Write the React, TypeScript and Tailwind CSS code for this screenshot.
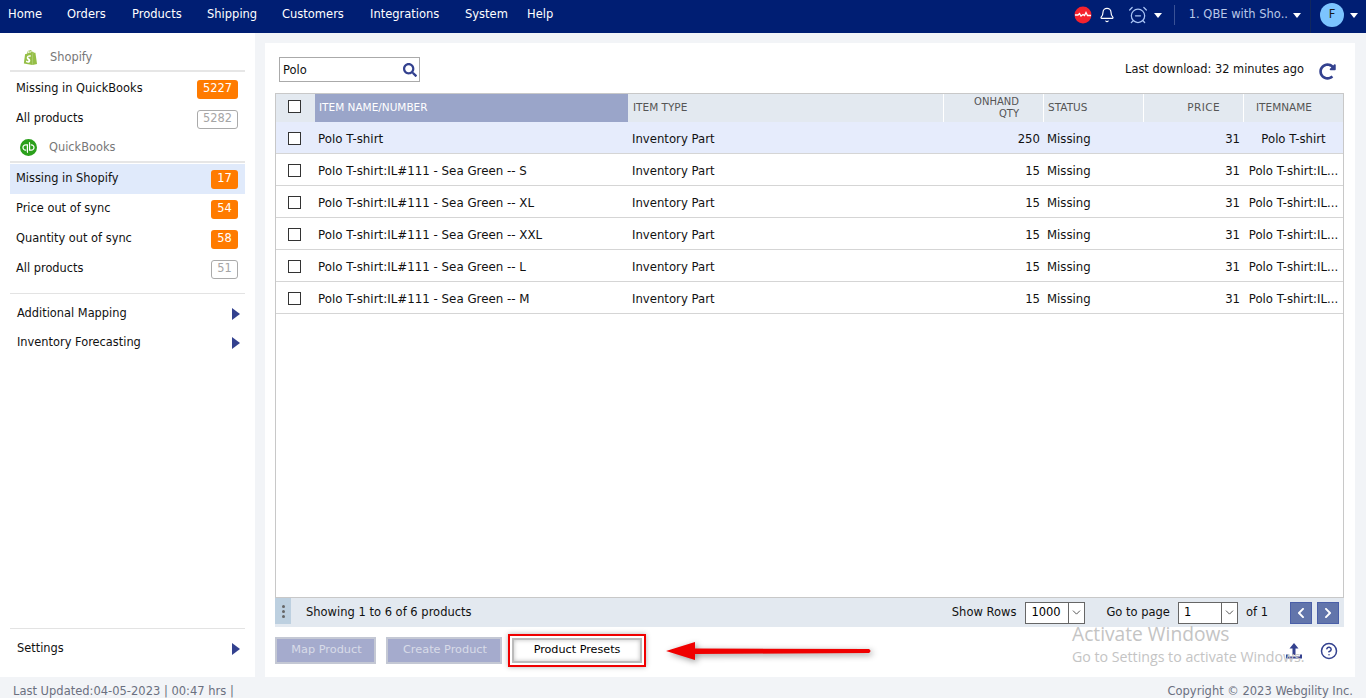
import { AlarmClockMinus, Bell, ChevronDown, CircleHelp } from 'lucide-react';
import { FaChevronLeft, FaChevronRight, FaRedoAlt, FaSearch } from 'react-icons/fa';
import { SiQuickbooks, SiShopify } from 'react-icons/si';

const navItems = [
	{ label: 'Home', width: 'w-[59px]' },
	{ label: 'Orders', width: 'w-[65px]' },
	{ label: 'Products', width: 'w-[75px]' },
	{ label: 'Shipping', width: 'w-[75px]' },
	{ label: 'Customers', width: 'w-[88px]' },
	{ label: 'Integrations', width: 'w-[95px]' },
	{ label: 'System', width: 'w-[62px]' },
	{ label: 'Help', width: 'w-[40px]' },
];

const rows = [
	{ name: 'Polo T-shirt', qty: '250', item: 'Polo T-shirt', selected: true },
	{ name: 'Polo T-shirt:IL#111 - Sea Green -- S', qty: '15', item: 'Polo T-shirt:IL...' },
	{ name: 'Polo T-shirt:IL#111 - Sea Green -- XL', qty: '15', item: 'Polo T-shirt:IL...' },
	{ name: 'Polo T-shirt:IL#111 - Sea Green -- XXL', qty: '15', item: 'Polo T-shirt:IL...' },
	{ name: 'Polo T-shirt:IL#111 - Sea Green -- L', qty: '15', item: 'Polo T-shirt:IL...' },
	{ name: 'Polo T-shirt:IL#111 - Sea Green -- M', qty: '15', item: 'Polo T-shirt:IL...' },
];

const gridCols = 'grid grid-cols-[39px_313px_316px_100px_100px_100px_99px]';

const Caret = () => (
	<span className="inline-block h-0 w-0 border-x-[4px] border-t-[5px] border-x-transparent border-t-white" />
);

const Arrow = () => (
	<span className="inline-block h-0 w-0 border-y-[6px] border-l-[8px] border-y-transparent border-l-[#33418f]" />
);

const CheckBox = () => <span className="block h-[13px] w-[13px] border border-[#333] bg-white" />;

const SideRow = ({ label, count, muted, active }: { label: string; count: string; muted?: boolean; active?: boolean }) => (
	<div className={`flex h-[30px] items-center justify-between pl-[6px] pr-[7px] ${active ? 'bg-[#e0eafb]' : ''}`}>
		<span className="text-[#111]">{label}</span>
		<span
			className={`flex h-[19px] min-w-[27px] items-center justify-center rounded-[3px] ${
				muted ? 'border border-[#aaa] bg-white px-[5px] text-[#a5a5a5]' : 'bg-[#ff7b00] px-[6px] text-white'
			}`}
		>
			{count}
		</span>
	</div>
);

const SideLink = ({ label }: { label: string }) => (
	<div className="flex h-[29px] items-center justify-between pl-[7px] pr-[5px] text-[#111]">
		<span>{label}</span>
		<Arrow />
	</div>
);

const SelectBox = ({ value, width }: { value: string; width: string }) => (
	<div className={`flex h-[22px] items-center border border-[#666] bg-white ${width}`}>
		<span className="flex-1 pl-[5px] text-black">{value}</span>
		<span className="flex h-full w-[16px] items-center justify-center border-l border-[#666]">
			<ChevronDown size={13} strokeWidth={1.5} color="#333" />
		</span>
	</div>
);

const App = () => {
	return (
		<div className="relative flex h-[698px] w-full flex-col overflow-hidden bg-[#f2f4f7] font-['DejaVu_Sans',sans-serif] text-[11.5px] text-[#111]">
			{/* top nav */}
			<header className="flex h-[33px] items-center bg-[#001e73] pb-[3px] pl-[8px] text-white">
				{navItems.map((n) => (
					<span key={n.label} className={n.width}>
						{n.label}
					</span>
				))}
				<div className="ml-auto flex h-full items-center">
					<svg width="18" height="18" viewBox="0 0 18 18" className="mr-[7px]">
						<circle cx="9" cy="9" r="8.5" fill="#f5222d" />
						<path d="M1 9h3l1.5-1.5L7 10l2-1.5 1.5 1 1.5-3 1.5 3H17" fill="none" stroke="#fff" strokeWidth="1.3" />
					</svg>
					<Bell size={16} strokeWidth={1.75} className="mr-[13px]" />
					<AlarmClockMinus size={20} strokeWidth={1.5} color="#a9c4f5" className="mr-[6px]" />
					<Caret />
					<span className="ml-[12px] mr-[14px] h-[20px] w-px bg-[#3a5296]" />
					<span className="mr-[5px] text-[#b8c8e8]">1. QBE with Sho..</span>
					<Caret />
					<span className="ml-[9px] h-[36px] w-px bg-[#10275f]" />
					<span className="ml-[9px] flex h-[24px] w-[24px] items-center justify-center rounded-full bg-[#7cc4ff] text-[#1a1a1a]">F</span>
					<span className="ml-[6px] mr-[8px] flex">
						<Caret />
					</span>
				</div>
			</header>

			<div className="flex h-[644px]">
				{/* left menu */}
				<aside className="flex w-[255px] flex-col bg-white px-[10px] pt-[12px] pb-[14px] text-[11.4px]">
					<div className="flex h-[27px] items-center border-b-2 border-[#e6e6e6] text-[#777]">
						<SiShopify size={15} color="#95bf47" className="ml-[13px] mr-[12px]" />
						<span>Shopify</span>
					</div>
					<div className="mt-[2px]">
						<SideRow label="Missing in QuickBooks" count="5227" />
						<SideRow label="All products" count="5282" muted />
					</div>
					<div className="flex h-[29px] items-center border-b-2 border-[#e6e6e6] text-[#777]">
						<SiQuickbooks size={17} color="#2ca01c" className="ml-[10px] mr-[12px]" />
						<span>QuickBooks</span>
					</div>
					<div className="mt-[1px]">
						<SideRow label="Missing in Shopify" count="17" active />
						<SideRow label="Price out of sync" count="54" />
						<SideRow label="Quantity out of sync" count="58" />
						<SideRow label="All products" count="51" muted />
					</div>
					<div className="mt-[9px] border-t border-[#e3e3e3] pt-[5px]">
						<SideLink label="Additional Mapping" />
						<SideLink label="Inventory Forecasting" />
					</div>
					<div className="mt-auto border-t border-[#e3e3e3] pt-[5px]">
						<SideLink label="Settings" />
					</div>
				</aside>

				{/* main panel */}
				<main className="ml-[10px] mt-[10px] flex w-[1090px] flex-col bg-white px-[10px]">
					<div className="flex h-[50px] items-center justify-between pt-[3px]">
						<div className="ml-[4px] flex h-[25px] w-[141px] items-center justify-between border border-[#aaa] pl-[3px] pr-[2px] text-[#111]">
							<span className="pt-[2px]">Polo</span>
							<FaSearch size={14} color="#33418f" />
						</div>
						<div className="flex items-center text-[11.4px]">
							<span>Last download: 32 minutes ago</span>
							<FaRedoAlt size={17} color="#33418f" className="ml-[15px] mr-[9px] mt-[3px]" />
						</div>
					</div>

					<div className="flex h-[505px] w-[1069px] flex-col border border-[#c8c8c8]">
						<div className={`${gridCols} h-[28px] bg-[#e3e9f0] text-[10.5px] text-[#555]`}>
							<div className="flex items-center pb-[4px] pl-[12px]">
								<CheckBox />
							</div>
							<div className="flex items-center bg-[#9aa5c9] pl-[4px] text-white">ITEM NAME/NUMBER</div>
							<div className="flex items-center border-r border-white pl-[5px]">ITEM TYPE</div>
							<div className="border-r border-white pr-[24px] pt-[2px] text-right text-[10px] leading-[12px]">
								ONHAND
								<br />
								QTY
							</div>
							<div className="flex items-center border-r border-white pl-[4px]">STATUS</div>
							<div className="flex items-center justify-end border-r border-white pr-[23px] tracking-[0.4px]">PRICE</div>
							<div className="flex items-center pl-[12px]">ITEMNAME</div>
						</div>
						{rows.map((r) => (
							<div
								key={r.name}
								className={`${gridCols} h-[32px] items-center border-b border-[#d5d5d5] pt-[4px] text-[11.7px] ${r.selected ? 'bg-[#e6ecfc]' : ''}`}
							>
								<div className="pb-[3px] pl-[12px]">
									<CheckBox />
								</div>
								<div className="pl-[3px] text-[11.85px]">{r.name}</div>
								<div className="pl-[4px]">Inventory Part</div>
								<div className="pr-[4px] text-right">{r.qty}</div>
								<div className="pl-[3px]">Missing</div>
								<div className="pr-[4px] text-right">31</div>
								<div className="whitespace-nowrap text-center">{r.item}</div>
							</div>
						))}
					</div>

					<div className="flex h-[29px] w-[1069px] items-center bg-[#e3e9f0]">
						<span className="flex h-[26px] w-[16px] flex-col items-center justify-center gap-[2px] self-start bg-[#bdd0e0]">
							<i className="h-[3px] w-[3px] rounded-full bg-[#666]" />
							<i className="h-[3px] w-[3px] rounded-full bg-[#666]" />
							<i className="h-[3px] w-[3px] rounded-full bg-[#666]" />
						</span>
						<span className="ml-[15px]">Showing 1 to 6 of 6 products</span>
						<div className="ml-auto flex items-center pr-[5px]">
							<span className="mr-[9px]">Show Rows</span>
							<SelectBox value="1000" width="w-[60px]" />
							<span className="ml-[21px] mr-[8px]">Go to page</span>
							<SelectBox value="1" width="w-[60px]" />
							<span className="ml-[8px] mr-[22px]">of 1</span>
							<span className="flex h-[22px] w-[22px] items-center justify-center border border-[#4a5fa8] bg-[#6275ab] text-white">
								<FaChevronLeft size={12} />
							</span>
							<span className="ml-[5px] flex h-[22px] w-[22px] items-center justify-center border border-[#4a5fa8] bg-[#6275ab] text-white">
								<FaChevronRight size={12} />
							</span>
						</div>
					</div>

					<div className="flex h-[50px] items-center pb-[3px]">
						<button className="h-[27px] w-[101px] border-2 border-[#c4c8d4] bg-[#a5abcd] pl-[2px] text-[11.3px] text-[#d8dbe8]">Map Product</button>
						<button className="ml-[10px] h-[27px] w-[116px] border-2 border-[#c4c8d4] bg-[#a5abcd] pl-[2px] text-[11.3px] text-[#d8dbe8]">Create Product</button>
						<div className="ml-[6px] flex h-[33px] w-[138px] items-center justify-center border-2 border-[#f00000] bg-white shadow-[0_0_5px_rgba(0,0,0,0.3)]">
							<button className="h-[25px] w-[130px] border-2 border-[#bbb] bg-white text-[11.2px] text-black shadow-[inset_0_0_4px_rgba(0,0,0,0.25)]">
								Product Presets
							</button>
						</div>
						<svg width="208" height="24" viewBox="0 0 208 24" className="ml-[20px] drop-shadow-[2px_2px_3px_rgba(0,0,0,0.4)]">
							<path d="M0 12 29 3v6.5l174 0.5q3 2 0 4L29 15v6z" fill="#f00000" />
						</svg>
						<div className="ml-auto flex items-center">
							<svg width="20" height="20" viewBox="0 0 20 20" className="mr-[16px]">
								<path d="M10 2 5.5 7.5h3V14h3V7.5h3z M2 13.5v4h16v-4h-2v2H4v-2z" fill="#33418f" />
							</svg>
							<CircleHelp size={18} color="#33418f" strokeWidth={2} className="mr-[7px]" />
						</div>
					</div>
				</main>
			</div>

			<footer className="flex h-[21px] items-center justify-between pl-[13px] pr-[13px] pt-[8px] text-[#6b7080]">
				<span>Last Updated:04-05-2023 | 00:47 hrs |</span>
				<span>Copyright © 2023 Webgility Inc.</span>
			</footer>

			{/* windows watermark */}
			<div className="pointer-events-none absolute left-[1072px] top-[621px] font-['Open_Sans',sans-serif] text-[#c4c4c4]">
				<div className="text-[19.2px] leading-[26px]">Activate Windows</div>
				<div className="text-[14.2px] leading-[19px]">Go to Settings to activate Windows.</div>
			</div>
		</div>
	);
};

export default App;
